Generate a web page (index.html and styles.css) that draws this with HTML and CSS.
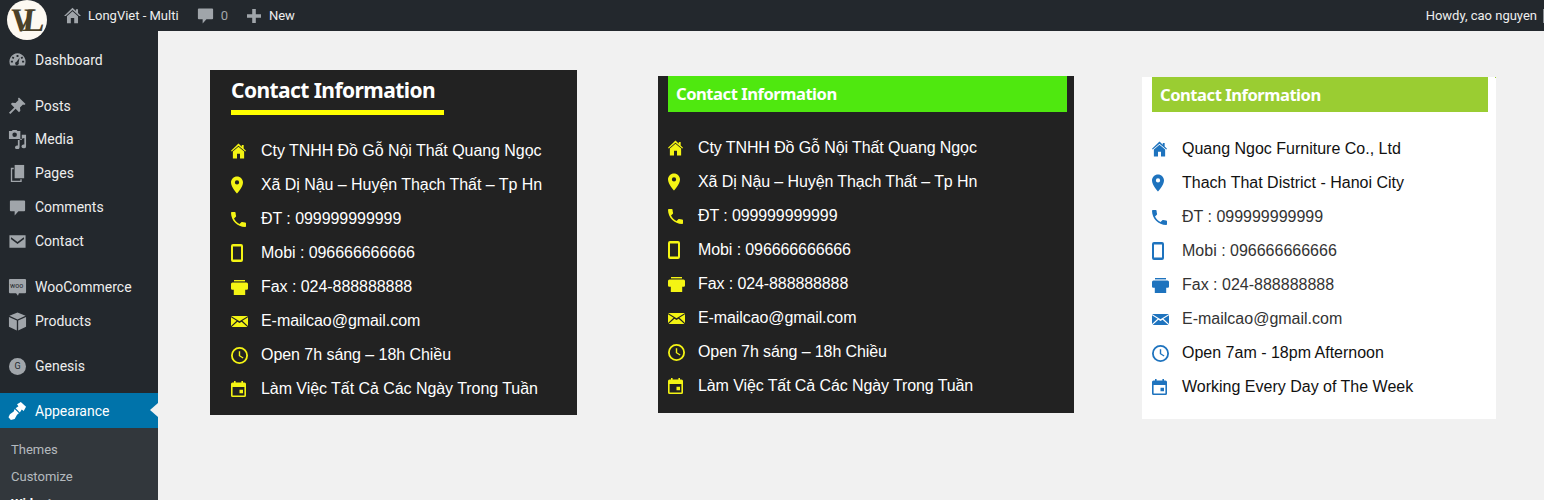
FILE: index.html
```html
<!DOCTYPE html>
<html lang="vi">
<head>
<meta charset="utf-8">
<title>Contact Information</title>
<link rel="stylesheet" href="styles.css">
</head>
<body>
<svg class="defs" width="0" height="0" aria-hidden="true">
  <symbol id="i-home" viewBox="0 0 16 16"><path d="M8 0 L0 7.6 L0.8 8.6 L8 2.4 L15.2 8.6 L16 7.6 L13.5 5.2 V1.5 H11.5 V3.4Z"/><path d="M8 3.4 L2 8.6 V16 H6.4 V11 H9.6 V16 H14 V8.6Z"/></symbol>
  <symbol id="i-pin" viewBox="5 2 14 20"><path d="M12 2C8.13 2 5 5.13 5 9c0 5.25 7 13 7 13s7-7.75 7-13c0-3.87-3.13-7-7-7zm0 9.5a2.5 2.5 0 0 1 0-5 2.5 2.5 0 0 1 0 5z"/></symbol>
  <symbol id="i-call" viewBox="3 3 18 18"><path d="M6.62 10.79c1.44 2.83 3.76 5.14 6.59 6.59l2.2-2.2c.27-.27.67-.36 1.02-.24 1.12.37 2.33.57 3.57.57.55 0 1 .45 1 1V20c0 .55-.45 1-1 1-9.39 0-17-7.61-17-17 0-.55.45-1 1-1h3.5c.55 0 1 .45 1 1 0 1.25.2 2.45.57 3.57.11.35.03.74-.25 1.02l-2.2 2.2z"/></symbol>
  <symbol id="i-mobile" viewBox="0 0 12 18"><path fill-rule="evenodd" d="M2 0H10a2 2 0 0 1 2 2V16a2 2 0 0 1-2 2H2a2 2 0 0 1-2-2V2a2 2 0 0 1 2-2ZM2 2.4V15.6H10V2.4Z"/></symbol>
  <symbol id="i-fax" viewBox="0 0 17 15"><path d="M3 0H14V1.4H3Z"/><path d="M1.5 2.4H15.5a1.5 1.5 0 0 1 1.5 1.5V8.6a1.2 1.2 0 0 1-1.2 1.2H14.2V15H2.8V9.8H1.2A1.2 1.2 0 0 1 0 8.6V3.9A1.5 1.5 0 0 1 1.5 2.4Z"/></symbol>
  <symbol id="i-mail" viewBox="0 0 17 11"><path d="M0 0H17L8.5 5.2Z"/><path d="M0 1.2V10L5.6 4.8Z"/><path d="M17 1.2V10L11.4 4.8Z"/><path d="M0.6 11H16.4L10.6 5.8 8.5 7.1 6.4 5.8Z"/></symbol>
  <symbol id="i-clock" viewBox="0 0 17 17"><path fill-rule="evenodd" d="M8.5 0a8.5 8.5 0 1 1 0 17a8.5 8.5 0 1 1 0-17ZM8.5 1.8a6.7 6.7 0 1 0 0 13.4a6.7 6.7 0 1 0 0-13.4Z"/><path d="M7.8 4.2H9.2V8.4L12.5 10.4 11.8 11.5 7.8 9.1Z"/></symbol>
  <symbol id="i-event" viewBox="0 0 15 16"><path fill-rule="evenodd" d="M3 0H4.6V1.6H10.4V0H12V1.6H13.5A1.5 1.5 0 0 1 15 3.1V14.5A1.5 1.5 0 0 1 13.5 16H1.5A1.5 1.5 0 0 1 0 14.5V3.1A1.5 1.5 0 0 1 1.5 1.6H3ZM1.6 6V14.4H13.4V6ZM8.5 8.8H12V12.2H8.5Z"/></symbol>

  <symbol id="a-gauge" viewBox="0 0 20 20"><path fill-rule="evenodd" d="M10 2.5a8.5 8.5 0 0 1 7.4 12.7H2.6A8.5 8.5 0 0 1 10 2.5ZM9 4.2V6.4H11V4.2ZM5 5.8 4 7.4 5.7 8.4 6.7 6.8ZM15 5.8 13.3 6.8 14.3 8.4 16 7.4ZM3 10.2V12.2H5.2V10.2ZM14.8 10.2V12.2H17V10.2ZM12.2 7 9 11.2a1.9 1.9 0 1 0 2.2 1.1Z"/></symbol>
  <symbol id="a-pin" viewBox="0 0 20 20"><path d="M11.5 1.5 18.5 8.5 17 9.6 15.8 8.9 12.6 12.1 13 15.6 11.6 17 8 13.4 2.5 19 1 17.6 6.6 12 3 8.4 4.4 7 7.9 7.4 11.1 4.2 10.4 3Z"/></symbol>
  <symbol id="a-media" viewBox="0 0 20 20"><path fill-rule="evenodd" d="M1 1H4L5 0H9L10 1H13V9.5H1ZM7 2.6A2.4 2.4 0 1 0 7 7.4 2.4 2.4 0 0 0 7 2.6Z"/><path d="M14.5 5H19V17.2A2.4 2 0 1 1 17.2 15.3V8.5L12.2 10V18.2A2.4 2 0 1 1 10.4 16.3V10.6H14.5Z"/></symbol>
  <symbol id="a-pages" viewBox="0 0 20 20"><path d="M7 1H17V15H7Z"/><path fill-rule="evenodd" d="M3 4H6V5.4H4.4V17.6H13V16H14.4V19H3Z"/></symbol>
  <symbol id="a-comment" viewBox="0 0 20 20"><path d="M3 2.5H17a1 1 0 0 1 1 1V13a1 1 0 0 1-1 1H11L7 18.5V14H3a1 1 0 0 1-1-1V3.5a1 1 0 0 1 1-1Z"/></symbol>
  <symbol id="a-mail" viewBox="0 0 20 20"><path d="M1.5 3.5H18.5V16.5H1.5ZM3.4 5.5 10 10.6 16.6 5.5 17 7.4 10 12.7 3 7.4Z" fill-rule="evenodd"/></symbol>
  <symbol id="a-woo" viewBox="0 0 20 20"><path d="M2 1H18a1.2 1.2 0 0 1 1 1V15a1.2 1.2 0 0 1-1 1H11.5L10.5 18.8 8.5 16H2a1.2 1.2 0 0 1-1-1V2a1.2 1.2 0 0 1 1-1Z"/></symbol>
  <symbol id="a-box" viewBox="0 0 20 20"><path d="M10 0.5 18.5 4 10 7.8 1.5 4Z"/><path d="M1 5.2 9.3 9V19.5L1 15.6Z"/><path d="M19 5.2 10.7 9V19.5L19 15.6Z"/></symbol>
  <symbol id="a-brush" viewBox="0 0 20 20"><path d="M9.5 3.5 13.5 1 19 6 16.5 10.5 14.5 9 12.5 12 8 7.5 11 5.5Z"/><path d="M7 8.5 11.5 13 9.5 14.5 7 19 3 20 0.5 17 2 14 6 11Z"/></symbol>
  <symbol id="a-house" viewBox="0 0 20 20"><path d="M10 1 0 10.5H2.2L10 3.4 17.8 10.5H20L16.5 7.2V2.5H14V4.8Z"/><path d="M10 5 3.5 10.8V19H8V13H12V19H16.5V10.8Z"/></symbol>
  <symbol id="a-plus" viewBox="0 0 20 20"><path d="M8.2 3H11.8V8.2H17V11.8H11.8V17H8.2V11.8H3V8.2H8.2Z"/></symbol>
</svg>

<header class="topbar">
  <div class="brand"><span class="brand-mark">VL</span></div>
  <a class="bar-site"><svg class="bar-home"><use href="#a-house"/></svg>LongViet - Multi</a>
  <a class="bar-comments"><svg class="bar-bubble"><use href="#a-comment"/></svg><span class="bar-count">0</span></a>
  <a class="bar-new"><svg class="bar-plus"><use href="#a-plus"/></svg>New</a>
  <a class="bar-user">Howdy, cao nguyen<span class="bar-avatar"></span></a>
</header>

<div class="shell">
  <nav class="sidebar">
    <ul class="menu menu-first">
      <li class="item"><svg class="mi"><use href="#a-gauge"/></svg>Dashboard</li>
    </ul>
    <ul class="menu menu-content">
      <li class="item item-short"><svg class="mi"><use href="#a-pin"/></svg>Posts</li>
      <li class="item"><svg class="mi"><use href="#a-media"/></svg>Media</li>
      <li class="item"><svg class="mi"><use href="#a-pages"/></svg>Pages</li>
      <li class="item"><svg class="mi"><use href="#a-comment"/></svg>Comments</li>
      <li class="item"><svg class="mi"><use href="#a-mail"/></svg>Contact</li>
    </ul>
    <ul class="menu menu-shop">
      <li class="item"><svg class="mi"><use href="#a-woo"/></svg><span class="woo-tag">woo</span>WooCommerce</li>
      <li class="item"><svg class="mi"><use href="#a-box"/></svg>Products</li>
    </ul>
    <ul class="menu menu-theme">
      <li class="item"><span class="mi g-badge">G</span>Genesis</li>
    </ul>
    <ul class="menu menu-appearance">
      <li class="item item-current"><svg class="mi"><use href="#a-brush"/></svg>Appearance</li>
    </ul>
    <ul class="submenu">
      <li>Themes</li>
      <li>Customize</li>
      <li class="sub-current">Widgets</li>
    </ul>
  </nav>

  <main class="content">
    <section class="card card-dark card-one">
      <h2 class="title-underlined">Contact Information</h2>
      <ul class="rows rows-one">
        <li><span class="ic"><svg class="s-home"><use href="#i-home"/></svg></span>Cty TNHH Đồ Gỗ Nội Thất Quang Ngọc</li>
        <li><span class="ic"><svg class="s-pin"><use href="#i-pin"/></svg></span>Xã Dị Nậu – Huyện Thạch Thất – Tp Hn</li>
        <li><span class="ic"><svg class="s-call"><use href="#i-call"/></svg></span>ĐT : 099999999999</li>
        <li><span class="ic"><svg class="s-mobile"><use href="#i-mobile"/></svg></span>Mobi : 096666666666</li>
        <li><span class="ic"><svg class="s-fax"><use href="#i-fax"/></svg></span>Fax : 024-888888888</li>
        <li><span class="ic"><svg class="s-mail"><use href="#i-mail"/></svg></span>E-mailcao@gmail.com</li>
        <li><span class="ic"><svg class="s-clock"><use href="#i-clock"/></svg></span>Open 7h sáng – 18h Chiều</li>
        <li><span class="ic"><svg class="s-event"><use href="#i-event"/></svg></span>Làm Việc Tất Cả Các Ngày Trong Tuần</li>
      </ul>
    </section>

    <section class="card card-dark card-two">
      <h2 class="title-band band-green">Contact Information</h2>
      <ul class="rows rows-two">
        <li><span class="ic"><svg class="s-home"><use href="#i-home"/></svg></span>Cty TNHH Đồ Gỗ Nội Thất Quang Ngọc</li>
        <li><span class="ic"><svg class="s-pin"><use href="#i-pin"/></svg></span>Xã Dị Nậu – Huyện Thạch Thất – Tp Hn</li>
        <li><span class="ic"><svg class="s-call"><use href="#i-call"/></svg></span>ĐT : 099999999999</li>
        <li><span class="ic"><svg class="s-mobile"><use href="#i-mobile"/></svg></span>Mobi : 096666666666</li>
        <li><span class="ic"><svg class="s-fax"><use href="#i-fax"/></svg></span>Fax : 024-888888888</li>
        <li><span class="ic"><svg class="s-mail"><use href="#i-mail"/></svg></span>E-mailcao@gmail.com</li>
        <li><span class="ic"><svg class="s-clock"><use href="#i-clock"/></svg></span>Open 7h sáng – 18h Chiều</li>
        <li><span class="ic"><svg class="s-event"><use href="#i-event"/></svg></span>Làm Việc Tất Cả Các Ngày Trong Tuần</li>
      </ul>
    </section>

    <section class="card card-light card-three">
      <h2 class="title-band band-olive">Contact Information</h2>
      <ul class="rows rows-three">
        <li class="strong"><span class="ic"><svg class="s-home"><use href="#i-home"/></svg></span>Quang Ngoc Furniture Co., Ltd</li>
        <li class="strong"><span class="ic"><svg class="s-pin"><use href="#i-pin"/></svg></span>Thach That District - Hanoi City</li>
        <li><span class="ic"><svg class="s-call"><use href="#i-call"/></svg></span>ĐT : 099999999999</li>
        <li><span class="ic"><svg class="s-mobile"><use href="#i-mobile"/></svg></span>Mobi : 096666666666</li>
        <li><span class="ic"><svg class="s-fax"><use href="#i-fax"/></svg></span>Fax : 024-888888888</li>
        <li><span class="ic"><svg class="s-mail"><use href="#i-mail"/></svg></span>E-mailcao@gmail.com</li>
        <li class="strong"><span class="ic"><svg class="s-clock"><use href="#i-clock"/></svg></span>Open 7am - 18pm Afternoon</li>
        <li class="strong"><span class="ic"><svg class="s-event"><use href="#i-event"/></svg></span>Working Every Day of The Week</li>
      </ul>
    </section>
  </main>
</div>
</body>
</html>
```
FILE: styles.css
```css
* { box-sizing: border-box; }
html, body { margin: 0; height: 500px; overflow: hidden; }
body { background: #f1f1f1; font-family: Roboto, "Noto Sans", sans-serif; }
ul { list-style: none; margin: 0; padding: 0; }
h2 { margin: 0; }
.defs { position: absolute; }

.topbar {
  height: 31px; background: #23282d; color: #eee; font-size: 13px;
  display: flex; align-items: center; position: relative; z-index: 2;
}
.topbar a { display: flex; align-items: center; }
.topbar svg { fill: #a0a5aa; }
.brand {
  position: absolute; left: 7px; top: 0; width: 40px; height: 40px; border-radius: 50%;
  background: #fdf9f2; color: #4b4129; overflow: hidden;
  display: flex; align-items: center; justify-content: center;
}
.brand-mark {
  font: 700 33px/1 "Liberation Serif", serif; letter-spacing: -11px;
  padding-right: 11px; transform: skewX(-6deg);
}
.bar-site { margin-left: 64px; }
.bar-home { width: 17px; height: 17px; margin-right: 7px; }
.bar-comments { margin-left: 17px; color: #a0a5aa; }
.bar-bubble { width: 19px; height: 19px; margin-right: 6px; }
.bar-count { margin-left: 0; }
.bar-new { margin-left: 16px; }
.bar-plus { width: 20px; height: 20px; margin-right: 5px; }
.bar-user { margin-left: auto; }
.bar-avatar { width: 1px; height: 14px; background: #8a8f94; margin-left: 6px; }

.shell { display: flex; height: 469px; }
.sidebar { width: 158px; background: #23282d; color: #eee; font-size: 14px; flex: none; position: relative; }
.item { height: 34px; display: flex; align-items: center; padding-left: 8px; position: relative; }
.item-short { height: 33px; }
.mi { width: 19px; height: 19px; fill: #a0a5aa; margin-right: 8px; flex: none; }
.menu-first { margin-top: 12px; }
.menu-content { margin-top: 12px; }
.menu-shop { margin-top: 12px; }
.menu-theme { margin-top: 11px; }
.menu-appearance { margin-top: 10px; }
.woo-tag { position: absolute; left: 10px; top: 13px; font-size: 7px; color: #23282d; line-height: 1; }
.g-badge {
  display: flex; align-items: center; justify-content: center; border-radius: 50%;
  background: #a0a5aa; color: #23282d; font-size: 9px; width: 17px; height: 17px; margin: 0 9px 0 1px;
}
.item-current { background: #0073aa; color: #fff; height: 35px; }
.item-current .mi { fill: #fff; }
.item-current::after {
  content: ""; position: absolute; right: 0; top: 10px;
  border: 7px solid transparent; border-left-width: 0; border-right: 8px solid #f1f1f1;
}
.submenu { background: #32373c; color: rgba(240,245,250,.7); font-size: 13px; padding: 8px 0 6px 11px; height: 80px; }
.submenu li { height: 27px; line-height: 27px; }
.sub-current { color: #fff; font-weight: 700; }

.content { flex: 1; display: flex; align-items: flex-start; padding-left: 52px; }
.card { flex: none; }
.card-dark { background: #222; color: #fff; }
.card-light { background: #fff; color: #333; position: relative; }
.card-one { width: 367px; margin-top: 39px; padding: 0 21px 9px; }
.card-two { width: 416px; margin: 45px 0 0 81px; padding: 0 7px 10px 10px; }
.card-three { width: 354px; margin: 46px 0 0 68px; padding: 0 8px 15px 10px; }
.card-three::after { content: ""; position: absolute; right: 0; top: 0; width: 1px; height: 1px; background: #9acd32; }

.title-underlined {
  width: 213px; height: 45px; border-bottom: 5px solid #ff0; color: #fff;
  font: 700 21px/41px "Noto Sans", sans-serif; letter-spacing: -0.58px; white-space: nowrap;
}
.title-band {
  color: #fff; font: 700 16.6px/36px "Noto Sans", sans-serif; letter-spacing: -0.48px; padding-left: 8px; white-space: nowrap;
}
.band-green { background: #4fe80f; height: 36px; }
.band-olive { background: #9acd32; height: 35px; }

.rows { font: 16px/34px "Liberation Sans", Arial, sans-serif; letter-spacing: -0.05px; }
.rows li { height: 34px; display: flex; align-items: center; white-space: nowrap; }
.rows-one { margin-top: 19px; }
.rows-two { margin-top: 19px; letter-spacing: -0.1px; }
.rows-three { margin-top: 20px; letter-spacing: 0; }
.ic { width: 30px; flex: none; display: flex; align-items: center; }
.ic svg { fill: #f4f414; display: block; }
.rows-three .ic svg { fill: #1e73be; }
.strong { color: #111; }
.s-home { width: 15px; height: 16px; }
.s-pin { width: 12px; height: 18px; }
.s-call { width: 15px; height: 15px; }
.s-mobile { width: 12px; height: 18px; }
.s-fax { width: 17px; height: 15px; }
.s-mail { width: 17px; height: 11px; }
.s-clock { width: 17px; height: 17px; }
.s-event { width: 15px; height: 16px; }
```
